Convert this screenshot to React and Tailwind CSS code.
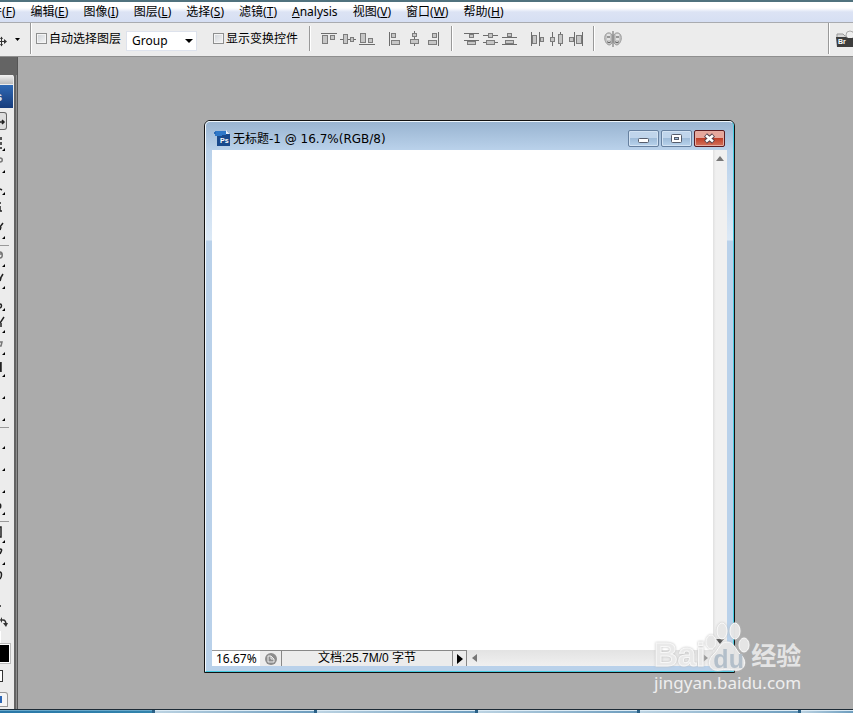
import React, { useState } from 'react';

const MENUS = [
  { label: '文件', hotkey: 'F' },
  { label: '编辑', hotkey: 'E' },
  { label: '图像', hotkey: 'I' },
  { label: '图层', hotkey: 'L' },
  { label: '选择', hotkey: 'S' },
  { label: '滤镜', hotkey: 'T' },
  { label: 'Analysis' },
  { label: '视图', hotkey: 'V' },
  { label: '窗口', hotkey: 'W' },
  { label: '帮助', hotkey: 'H' },
];

// lines and boxes are [x, y, width, height] on a 16x16 grid
const ALIGN_EDGES = [
  { name: 'Align top edges', lines: [[0, 2, 16, 1]], boxes: [[1, 4, 6, 9], [9, 4, 5, 5]] },
  { name: 'Align vertical centers', lines: [[0, 8, 16, 1]], boxes: [[3, 3, 5, 10], [10, 6, 4, 5]] },
  { name: 'Align bottom edges', lines: [[0, 13, 16, 1]], boxes: [[1, 2, 6, 10], [9, 7, 5, 5]] },
];
const ALIGN_SIDES = [
  { name: 'Align left edges', lines: [[1, 1, 1, 14]], boxes: [[3, 2, 5, 5], [3, 9, 9, 5]] },
  { name: 'Align horizontal centers', lines: [[7, 0, 1, 15]], boxes: [[5, 2, 5, 4], [3, 8, 9, 5]] },
  { name: 'Align right edges', lines: [[12, 1, 1, 14]], boxes: [[6, 2, 5, 5], [2, 9, 9, 5]] },
];
const DISTRIBUTE_ROWS = [
  { name: 'Distribute top edges', lines: [[0, 2, 15, 1], [0, 9, 15, 1]], boxes: [[5, 3, 5, 4], [3, 10, 9, 4]] },
  { name: 'Distribute vertical centers', lines: [[0, 4, 15, 1], [0, 11, 15, 1]], boxes: [[5, 2, 5, 5], [3, 9, 9, 5]] },
  { name: 'Distribute bottom edges', lines: [[0, 6, 15, 1], [0, 13, 15, 1]], boxes: [[5, 2, 5, 4], [3, 9, 9, 4]] },
];
const DISTRIBUTE_COLS = [
  { name: 'Distribute left edges', lines: [[1, 1, 1, 14], [9, 1, 1, 14]], boxes: [[2, 4, 5, 9], [10, 6, 4, 5]] },
  { name: 'Distribute horizontal centers', lines: [[3, 1, 1, 14], [11, 1, 1, 14]], boxes: [[1, 6, 5, 5], [9, 3, 5, 10]] },
  { name: 'Distribute right edges', lines: [[6, 1, 1, 14], [14, 1, 1, 14]], boxes: [[1, 6, 5, 5], [8, 4, 6, 9]] },
];

// each glyph is the right end of a 22px tool icon, drawn on a 7x22 grid
const TOOL_GROUPS = [
  [
    { name: 'Move', selected: true, path: 'M0 14h4M2 12l2 2-2 2' },
    { name: 'Marquee', path: 'M1 7v3M1 12v3M1 17v2', corner: true },
    { name: 'Lasso', path: 'M0 6c3 0 3 4 0 4', corner: true, soft: true },
    { name: 'Quick Selection', path: 'M0 15l2 1', corner: true },
    { name: 'Crop', path: 'M0 7h1M0 15h2M0 10v5' },
    { name: 'Slice', path: 'M0 9l3-4M0 12l1-3', corner: true },
  ],
  [
    { name: 'Healing Brush', path: 'M0 6c3 0 3 6 0 6M0 8h2', corner: true, soft: true },
    { name: 'Brush', path: 'M0 11l3-5M0 13l1-3', corner: true },
    { name: 'Clone Stamp', path: 'M0 14c2 0 2 3 0 4', corner: true },
    { name: 'History Brush', path: 'M0 11l4-6M1 11v4', corner: true },
    { name: 'Eraser', path: 'M0 8h2l-1 4H0', corner: true, soft: true },
    { name: 'Gradient', path: 'M0 7h1v8H0zM1 6v10', corner: true },
    { name: 'Blur', path: '', corner: true },
    { name: 'Dodge', path: '', corner: true },
  ],
  [
    { name: 'Pen', path: '', corner: true },
    { name: 'Type', path: '', corner: true },
    { name: 'Path Selection', path: '', corner: true },
    { name: 'Shape', path: 'M0 10c1 0 1 4 0 4', corner: true },
  ],
  [
    { name: 'Notes', path: 'M0 5h1v10H0', corner: true },
    { name: 'Eyedropper', path: 'M0 5c3 0 1 3 0 5', corner: true },
    { name: 'Hand', path: 'M0 6c2 0 2 5 0 7' },
    { name: 'Zoom', path: 'M0 18h1' },
  ],
];

function GlyphIcon({ lines, boxes }) {
  return (
    <svg viewBox="0 0 16 16" className="h-4 w-4" shapeRendering="crispEdges">
      {lines.map(([x, y, w, h], i) => (
        <rect key={i} x={x} y={y} width={w} height={h} fill="#6c6c6c" />
      ))}
      {boxes.map(([x, y, w, h], i) => (
        <g key={i}>
          <rect x={x} y={y} width={w} height={h} fill="#7c7c7c" />
          <rect x={x + 1} y={y + 1} width={w - 2} height={h - 2} fill="#c6c6c6" />
        </g>
      ))}
    </svg>
  );
}

function IconGroup({ icons, className }) {
  return (
    <div className={`flex gap-[3px] ${className}`}>
      {icons.map((icon) => (
        <button key={icon.name} type="button" aria-label={icon.name}>
          <GlyphIcon lines={icon.lines} boxes={icon.boxes} />
        </button>
      ))}
    </div>
  );
}

function Separator({ className }) {
  return <div className={`h-[25px] w-[2px] border-l border-[#999] bg-white ${className}`} />;
}

function MenuBar() {
  return (
    <nav className="flex h-[23px] shrink-0 items-center overflow-hidden border-t-2 border-b border-t-[#50727e] border-b-[#a9abb0] bg-linear-to-b from-white from-30% via-[#dce3f4] via-50% to-[#d6dff3]">
      <div className="-ml-[22px] flex gap-[15px]">
        {MENUS.map((menu) => (
          <button key={menu.label} type="button" className="h-5 text-[12px] leading-5 whitespace-nowrap">
            {menu.hotkey ? (
              <>
                {menu.label}(<span className="underline underline-offset-1">{menu.hotkey}</span>)
              </>
            ) : (
              <>
                <span className="underline underline-offset-1">A</span>nalysis
              </>
            )}
          </button>
        ))}
      </div>
    </nav>
  );
}

function OptionCheckbox({ id, label }) {
  const [checked, setChecked] = useState(false);

  return (
    <div className="flex items-center gap-[2px]">
      <input
        id={id}
        type="checkbox"
        checked={checked}
        onChange={(e) => setChecked(e.target.checked)}
        className="h-[11px] w-[11px] appearance-none border border-[#8e8f8f] bg-linear-to-br from-[#cfd3d8] to-[#f6f6f6] shadow-[inset_0_0_0_1px_#f4f4f4] checked:bg-[#3a6ea5]"
      />
      <label htmlFor={id} className="text-[12px] leading-4 whitespace-nowrap">{label}</label>
    </div>
  );
}

function OptionsBar() {
  const [target, setTarget] = useState('Group');

  return (
    <div className="flex h-[34px] shrink-0 items-center border-b border-[#8f8f8f] bg-[#ececec] pb-[2px]">
      <button type="button" aria-label="Move tool presets" className="flex w-[30px] items-center">
        <svg viewBox="0 0 30 16" className="h-4 w-[30px]">
          <path d="M0 10.500h5M1.500 6v9" stroke="#333" fill="none" />
          <path d="M4 8l3 2.500-3 2.500zM0 8l1.500-2.500L3 8zM0 13l1.500 2.500L3 13z" fill="#333" />
          <path d="M15 7h5l-2.500 3z" fill="#000" />
        </svg>
      </button>
      <div className="h-[31px] w-[2px] border-l border-[#999] bg-white" />
      <div className="ml-1 flex items-center">
        <OptionCheckbox id="auto-select" label="自动选择图层" />
        <div className="relative mt-1 ml-[5px]">
          <select
            aria-label="自动选择图层"
            value={target}
            onChange={(e) => setTarget(e.target.value)}
            className="block h-5 w-[71px] appearance-none border border-[#dde2ec] bg-white pl-[5px] font-['Noto_Sans'] text-[12px] leading-4"
          >
            <option>Group</option>
            <option>Layer</option>
          </select>
          <svg viewBox="0 0 8 4" className="pointer-events-none absolute top-2 right-1 h-1 w-2">
            <path d="M0 0h8l-4 4z" />
          </svg>
        </div>
      </div>
      <div className="ml-4">
        <OptionCheckbox id="show-transform" label="显示变换控件" />
      </div>
      <Separator className="ml-[11px]" />
      <IconGroup icons={ALIGN_EDGES} className="ml-[10px]" />
      <IconGroup icons={ALIGN_SIDES} className="ml-[13px]" />
      <Separator className="ml-[9px]" />
      <IconGroup icons={DISTRIBUTE_ROWS} className="ml-[11px]" />
      <IconGroup icons={DISTRIBUTE_COLS} className="ml-3" />
      <Separator className="ml-[9px]" />
      <button type="button" aria-label="Auto-align layers" className="ml-[9px]">
        <svg viewBox="0 0 18 16" className="h-4 w-[18px]">
          <path d="M8 4C7 1 2 1 1 5s1 8 4 9c2 0 3-2 3-3zM10 4c1-3 6-3 7 1s-1 8-4 9c-2 0-3-2-3-3z" fill="#c6c6c6" stroke="#999" />
          <path d="M3 6h3M12 6h3M3 10.500c1 1.500 3 1.500 4 0M11 10.500c1 1.500 3 1.500 4 0" fill="none" stroke="#666" />
          <path d="M3 4h3M12 4h3M3 8h3M12 8h3" stroke="#fff" />
          <path d="M9 0v16" stroke="#666" />
        </svg>
      </button>
      <div className="ml-auto h-[31px] w-[2px] border-l border-[#999] bg-white" />
      <button type="button" aria-label="Go to Bridge" className="ml-[6px] w-[17px] overflow-hidden">
        <svg viewBox="0 0 17 18" className="h-[18px] w-[17px]">
          <path d="M1 4h6l2 2h8v3H1z" fill="#d8d8d8" stroke="#999" />
          <circle cx="14" cy="5" r="4" fill="#eee" stroke="#aaa" />
          <path d="M0 7h10l2 1h5v9H1z" fill="#3d3d3d" />
          <text x="2" y="14" fontSize="7" fontWeight="bold" fill="#fff" fontFamily="Liberation Sans, sans-serif">Br</text>
        </svg>
      </button>
    </div>
  );
}

function ToolButton({ tool }) {
  return (
    <button
      type="button"
      aria-label={tool.name}
      className={tool.selected
        ? 'mt-1 block h-[18px] w-[7px] rounded-r-[3px] border-y border-r border-[#666] bg-[#ddd]'
        : 'block h-[22px] w-[7px]'}
    >
      <svg viewBox={tool.selected ? '0 5 7 16' : '0 0 7 22'} className={tool.selected ? 'h-4 w-[7px]' : 'h-[22px] w-[7px]'}>
        <path d={tool.path} fill="none" stroke={tool.soft ? '#777' : '#222'} strokeWidth="1.500" />
        {tool.corner && <path d="M5 18v3H2z" fill="#000" />}
      </svg>
    </button>
  );
}

function ToolPanel() {
  return (
    <aside className="flex w-[18px] shrink-0 flex-col overflow-hidden border-r border-[#555] bg-[#646464] pt-[18px]">
      <div className="flex flex-1 border-r border-[#8d8d8d]">
        <div className="flex w-[14px] flex-col rounded-tr-[2px] bg-[#ececec]">
          <div className="h-[9px] w-[13px] bg-linear-to-b from-[#f2f2f2] to-[#bdbdbd]" />
          <div className="mt-[1px] flex h-[23px] w-[13px] items-center overflow-hidden bg-linear-to-b from-[#2f69b4] to-[#173c7c]">
            <span className="-ml-[5px] font-['Liberation_Sans'] text-[13px] font-bold text-[#dce9f7]">s</span>
          </div>
          {TOOL_GROUPS.map((group, i) => (
            <div key={i} className={i === 0 ? '' : 'mt-[5px] w-[9px] border-t border-[#999]'}>
              {group.map((tool) => <ToolButton key={tool.name} tool={tool} />)}
            </div>
          ))}
          <button type="button" aria-label="Switch colors" className="mt-[6px] h-3 w-2">
            <svg viewBox="0 0 8 12" className="h-3 w-2">
              <path d="M1 4h2q3 0 3 5" fill="none" stroke="#333" strokeWidth="1.500" />
              <path d="M3 7h5l-2 4zM0 4l2-3v6z" fill="#333" />
            </svg>
          </button>
          <div className="mt-[3px] h-3 w-[1px] bg-white" />
          <button type="button" aria-label="Foreground color" className="h-[21px] w-[11px] border-y border-r border-[#bbb] bg-black shadow-[inset_-1px_0_0_#fff,inset_0_1px_0_#fff,inset_0_-1px_0_#fff]" />
          <button type="button" aria-label="Quick mask" className="mt-[6px] h-3 w-[3px] border-y border-r border-[#333] bg-white" />
          <button type="button" aria-label="Screen mode" className="mt-[10px] h-[15px] w-2 rounded-tr-[3px] border border-l-0 border-[#999] bg-[#f5f5f5]">
            <svg viewBox="0 0 7 13" className="h-[13px] w-[7px]">
              <path d="M0 4h1v5H0" fill="none" stroke="#2c66b5" strokeWidth="2" />
            </svg>
          </button>
        </div>
      </div>
    </aside>
  );
}

function CaptionButton({ label, danger, children }) {
  return (
    <button
      type="button"
      aria-label={label}
      className={`flex h-[17px] w-[31px] items-center justify-center rounded-[2px] border ${
        danger
          ? 'border-[#5a1c22] bg-linear-to-b from-[#e6a79c] from-50% via-[#bf3f28] via-50% to-[#d4725c] shadow-[inset_0_0_0_1px_#e5aca1]'
          : 'border-[#66809f] bg-linear-to-b from-[#c0d5eb] from-50% via-[#9fbcd9] via-50% to-[#b9d3ec] shadow-[inset_0_0_0_1px_#d3e3f3]'
      }`}
    >
      <svg viewBox="0 0 15 11" className="h-[11px] w-[15px]">{children}</svg>
    </button>
  );
}

function TitleBar() {
  return (
    <header className="flex h-7 shrink-0 items-center px-2">
      <svg viewBox="0 0 16 17" className="mt-1 h-[17px] w-4">
        <path d="M3 1h10l3 3v12H3z" fill="#194a8c" />
        <path d="M12 0l4 4h-4z" fill="#e9f1fa" />
        <path d="M1 1h11v4H8v1H1z" fill="#2f78c8" />
        <path d="M0 2h2v2H0z" fill="#2a69b4" />
        <text x="6" y="13" fontSize="7" fontWeight="bold" fill="#fff" fontFamily="Liberation Sans, sans-serif">Ps</text>
      </svg>
      <h1 className="mt-[5px] ml-[3px] flex-1 font-['DejaVu_Sans','Noto_Sans_CJK_SC',sans-serif] text-[12px] leading-4 whitespace-nowrap">无标题-1 @ 16.7%(RGB/8)</h1>
      <div className="mt-[5px] flex gap-[2px]">
        <CaptionButton label="Minimize">
          <rect x="2.500" y="5.500" width="10" height="4" rx="1" fill="#fff" stroke="#555c6b" />
        </CaptionButton>
        <CaptionButton label="Maximize">
          <rect x="2.500" y="1.500" width="10" height="8" rx="1" fill="#fff" stroke="#555c6b" />
          <rect x="5.500" y="4.500" width="4" height="2" fill="#9fbcd9" stroke="#555c6b" />
        </CaptionButton>
        <CaptionButton label="Close" danger>
          <path d="M3.500 2l8 7M11.500 2l-8 7" stroke="#54424c" strokeWidth="4.500" />
          <path d="M4 2.500l7 6M11 2.500l-7 6" stroke="#fff" strokeWidth="2.500" />
        </CaptionButton>
      </div>
    </header>
  );
}

function StatusBar() {
  const [zoom, setZoom] = useState('16.67%');

  return (
    <footer className="flex h-4 shrink-0 bg-[#ececec]">
      <input
        aria-label="Zoom"
        value={zoom}
        onChange={(e) => setZoom(e.target.value)}
        className="h-4 w-12 border-t border-[#999] bg-white pl-1 font-['Noto_Sans'] text-[12px] leading-4"
      />
      <button type="button" aria-label="Version Cue" className="flex w-[22px] items-center justify-center border-t border-r border-[#888]">
        <svg viewBox="0 0 14 14" className="h-[14px] w-[14px]">
          <circle cx="7" cy="7" r="6" fill="#8c8c8c" />
          <path d="M4 10V4h3l3 3v3zM7 4v3h3" fill="none" stroke="#eee" />
        </svg>
      </button>
      <div className="w-[171px] border-t border-r border-[#888] text-center font-['Liberation_Sans','Noto_Sans_CJK_SC',sans-serif] text-[12px] leading-[15px] whitespace-nowrap">
        文档:25.7M/0 字节
      </div>
      <button type="button" aria-label="Status options" className="flex w-[14px] items-center justify-center border-t border-r border-[#888]">
        <svg viewBox="0 0 6 10" className="h-[10px] w-[6px]"><path d="M0 0l6 5-6 5z" /></svg>
      </button>
      <div className="flex flex-1 items-center justify-between bg-linear-to-b from-[#e3e3e3] to-[#f0f0f0] px-[5px]">
        <svg viewBox="0 0 5 8" className="h-2 w-[5px]"><path d="M5 0v8L0 4z" fill="#777" /></svg>
        <svg viewBox="0 0 5 8" className="h-2 w-[5px]"><path d="M0 0v8l5-4z" fill="#999" /></svg>
      </div>
      <svg viewBox="0 0 14 16" className="h-4 w-[14px]">
        <path d="M10 4h2M6 8h2M10 8h2M2 12h2M6 12h2M10 12h2" stroke="#aaa" strokeWidth="2" />
      </svg>
    </footer>
  );
}

function DocumentWindow() {
  return (
    <section className="absolute top-[63px] left-[186px] flex h-[553px] w-[531px] flex-col rounded-t-[6px] border border-[#111] bg-[#b9d1ea]">
      <div className="flex flex-1 flex-col rounded-t-[5px] border border-t-[#eef6fc] border-r-[#44cbe0] border-b-[#44cbe0] border-l-[#f4f9fd] bg-linear-to-b from-[#99b4d1] from-0% via-[#b9d1ea] via-5% to-[#b9d1ea]">
        <TitleBar />
        <div className="flex flex-1 flex-col bg-[linear-gradient(#b9d1ea,#dce9f6_90px,#b9d1ea_91px)] px-[6px] pb-[5px]">
          <div className="flex flex-1">
            <div className="flex-1 bg-white" />
            <div className="flex w-[14px] flex-col items-center justify-between bg-linear-to-r from-[#e0e0e0] to-[#f0f0f0] to-20% py-[6px]">
              <svg viewBox="0 0 8 5" className="h-[5px] w-2"><path d="M0 5h8L4 0z" fill="#777" /></svg>
              <svg viewBox="0 0 8 5" className="h-[5px] w-2"><path d="M0 0h8L4 5z" fill="#555" /></svg>
            </div>
          </div>
          <StatusBar />
        </div>
      </div>
    </section>
  );
}

function Watermark() {
  return (
    <div className="pointer-events-none absolute right-12 bottom-[18px] w-[151px] text-white">
      <div className="flex h-[50px] items-end whitespace-nowrap">
        <span className="shrink-0 font-['Liberation_Sans'] text-[33px] leading-[32px] font-bold text-[#e9e9e9] [-webkit-text-stroke:1px_#f8f8f8] drop-shadow-[0_0_1px_#bbb]">Bai</span>
        <div className="relative h-[50px] w-[46px] shrink-0 drop-shadow-[0_0_1px_#bbb]">
          <svg viewBox="0 0 46 50" className="h-[50px] w-[46px]" fill="#ececec" fillOpacity="0.85" stroke="#fafafa">
            <ellipse cx="6" cy="21" rx="5" ry="7" />
            <ellipse cx="17" cy="10" rx="5" ry="8" />
            <ellipse cx="30" cy="10" rx="5" ry="8" />
            <ellipse cx="39" cy="24" rx="5" ry="7" />
            <path d="M22 21c7 0 8 7 13 12 9 8 4 18-6 16-5-1-9-1-14 0-10 2-15-8-6-16 5-5 6-12 13-12z" />
          </svg>
          <span className="absolute bottom-0 left-2 font-['Liberation_Sans'] text-[25px] leading-6 font-bold text-[#b3bfca]">du</span>
        </div>
        <span className="text-[25px] leading-8 font-bold text-white/70">经验</span>
      </div>
      <div className="font-['Noto_Sans'] text-[17px] leading-6 whitespace-nowrap text-white/80">jingyan.baidu.com</div>
    </div>
  );
}

function Taskbar() {
  return (
    <div className="grid h-1 shrink-0 grid-cols-[153fr_159fr_159fr_159fr_159fr_52fr] gap-[3px] border-t border-[#1d2b36] bg-[#2b6187]">
      {['start', 'explorer', 'browser', 'editor', 'player', 'photoshop'].map((task) => (
        <div
          key={task}
          className={task === 'start'
            ? 'border-t border-[#6aa9cb] bg-linear-to-r from-[#2a78a8] to-[#3384ac]'
            : 'border-t border-[#dcebf5] bg-linear-to-r from-[#bcd3e2] to-[#6c9cbd]'}
        />
      ))}
    </div>
  );
}

export default function App() {
  return (
    <div className="relative flex h-screen flex-col overflow-hidden bg-[#ababab] font-['Noto_Sans','Noto_Sans_CJK_SC',sans-serif] text-black">
      <MenuBar />
      <OptionsBar />
      <div className="flex min-h-0 flex-1">
        <ToolPanel />
        <main className="relative flex-1">
          <DocumentWindow />
        </main>
      </div>
      <Taskbar />
      <Watermark />
    </div>
  );
}
